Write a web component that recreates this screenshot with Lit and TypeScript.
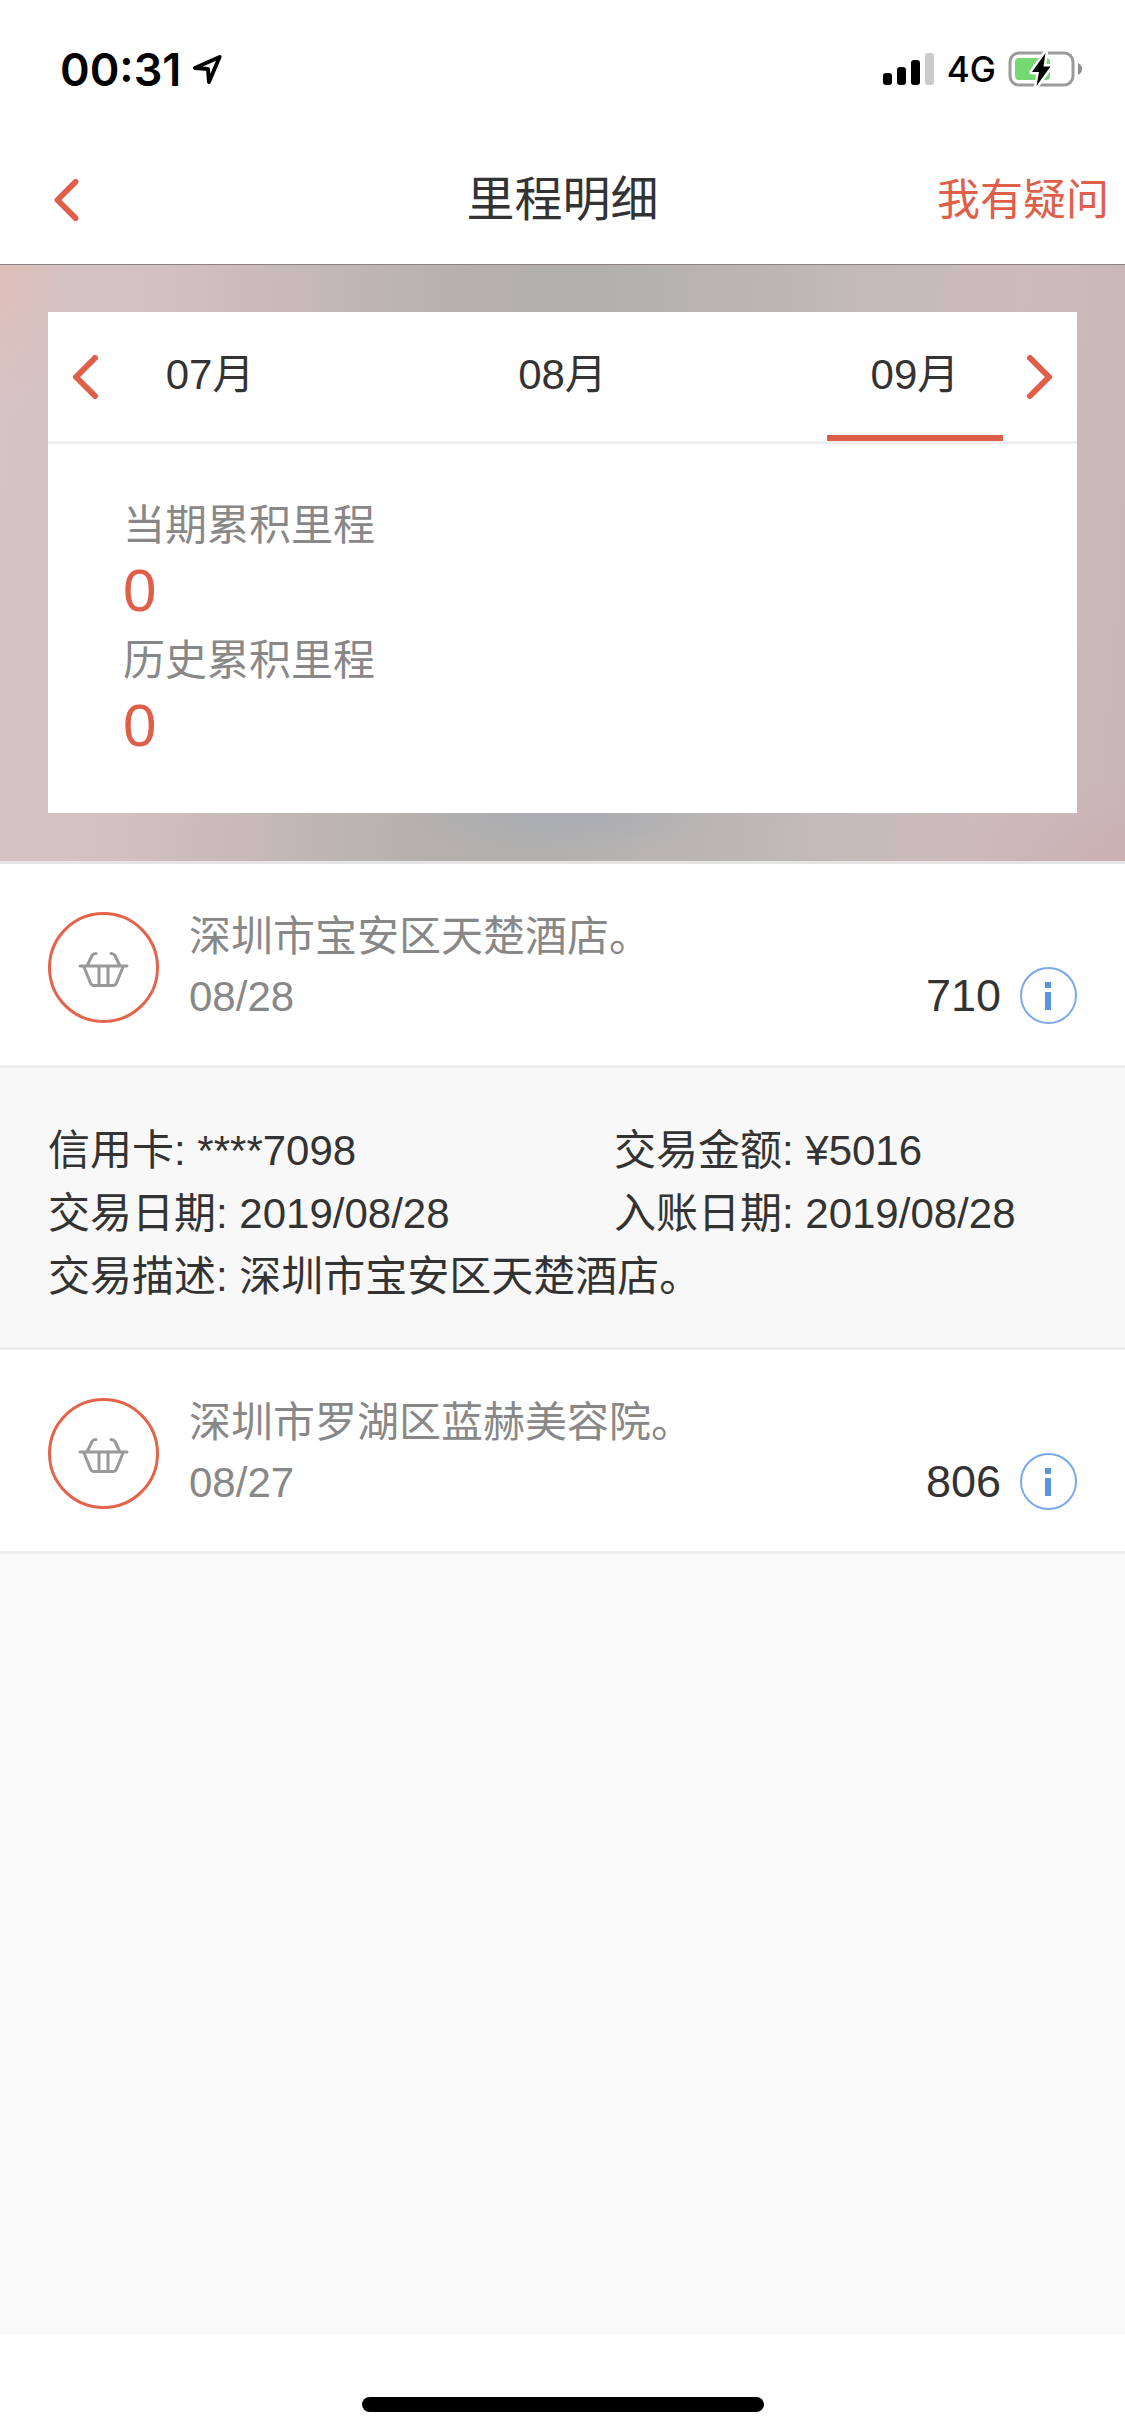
import { LitElement, html, css, svg, nothing } from "lit";
import { customElement, property, state } from "lit/decorators.js";

interface Transaction {
  id: number;
  merchant: string;
  day: string;
  miles: number;
  card: string;
  amount: string;
  tradeDate: string;
  postDate: string;
}

const TRANSACTIONS: Transaction[] = [
  {
    id: 1,
    merchant: "深圳市宝安区天楚酒店。",
    day: "08/28",
    miles: 710,
    card: "****7098",
    amount: "¥5016",
    tradeDate: "2019/08/28",
    postDate: "2019/08/28",
  },
  {
    id: 2,
    merchant: "深圳市罗湖区蓝赫美容院。",
    day: "08/27",
    miles: 806,
    card: "****7098",
    amount: "",
    tradeDate: "2019/08/27",
    postDate: "2019/08/27",
  },
];

const chevron = (direction: "left" | "right") => html`
  <svg class="chevron" viewBox="0 0 26 44" aria-hidden="true">
    ${direction === "left"
      ? svg`<path d="M23 3 L4 22 L23 41" />`
      : svg`<path d="M3 3 L22 22 L3 41" />`}
  </svg>
`;

const shared = css`
  * {
    box-sizing: border-box;
  }
  button {
    margin: 0;
    padding: 0;
    border: 0;
    background: none;
    font: inherit;
    color: inherit;
    cursor: pointer;
  }
  svg {
    display: block;
  }
  .chevron {
    width: 26px;
    height: 44px;
    fill: none;
    stroke: #e05f49;
    stroke-width: 6;
    stroke-linecap: round;
    stroke-linejoin: round;
  }
`;

@customElement("status-bar")
export class StatusBar extends LitElement {
  static styles = [
    shared,
    css`
      :host {
        display: flex;
        align-items: center;
        justify-content: space-between;
        box-sizing: border-box;
        height: 132px;
        padding: 6px 41px 0 60px;
        font-family: Inter, "Liberation Sans", sans-serif;
        color: #000;
      }
      .group {
        display: flex;
        align-items: center;
      }
      .time {
        font-size: 45px;
        font-weight: 600;
      }
      .arrow {
        width: 31px;
        height: 31px;
        margin-left: 11px;
      }
      .signal {
        width: 52px;
        height: 34px;
      }
      .network {
        margin: 0 12px;
        font-size: 35px;
        font-weight: 500;
      }
      .battery {
        width: 76px;
        height: 38px;
      }
    `,
  ];

  render() {
    return html`
      <div class="group">
        <span class="time">00:31</span>
        <svg class="arrow" viewBox="0 0 32 32" aria-hidden="true">
          <path
            d="M28.5 3 L3 14.500 L16.500 15.500 L17.500 29 Z"
            fill="none"
            stroke="#000"
            stroke-width="4"
            stroke-linejoin="round"
          />
        </svg>
      </div>
      <div class="group">
        <svg class="signal" viewBox="0 0 52 34" aria-hidden="true">
          <rect x="0" y="21" width="9" height="12" rx="3" />
          <rect x="14" y="15" width="9" height="18" rx="3" />
          <rect x="28" y="8" width="9" height="25" rx="3" />
          <rect x="42" y="1" width="9" height="32" rx="3" fill="#cbcbcb" />
        </svg>
        <span class="network">4G</span>
        <svg class="battery" viewBox="0 0 76 38" aria-hidden="true">
          <rect x="2" y="3" width="63" height="32" rx="9" fill="#fff" stroke="#9b9b9b" stroke-width="3" />
          <rect x="7" y="8" width="35" height="22" rx="4" fill="#75d873" />
          <path d="M70 13 Q74 15 74 19 Q74 23 70 25 Z" fill="#8c8c8c" />
          <path
            d="M37.5 3 L24 22 H31 L28.5 36 L42.5 16.5 H35.5 Z"
            fill="#000"
            stroke="#fff"
            stroke-width="5"
            stroke-linejoin="round"
            paint-order="stroke"
          />
        </svg>
      </div>
    `;
  }
}

@customElement("month-summary")
export class MonthSummary extends LitElement {
  @state() private selected = "09月";

  static styles = [
    shared,
    css`
      :host {
        display: block;
        padding: 47px 48px 48px;
        border-bottom: 3px solid #e6e4e4;
        background:
          radial-gradient(ellipse 70px 150px at 0 0, #dfbfb8, transparent),
          radial-gradient(ellipse 180px 80px at 100% 100%, #ccb1b1, transparent),
          radial-gradient(ellipse 160px 40px at 50% 92%, #abadb2, transparent),
          linear-gradient(
            95deg,
            #d6c4c5 0%,
            #d3c0c2 14%,
            #c6b9b8 26%,
            #b4b0ae 40%,
            #b1b0af 50%,
            #b9b5b4 63%,
            #c5babb 75%,
            #cdbbbe 87%,
            #c8b5b8 100%
          );
      }
      .card {
        background: #fff;
      }
      .months {
        display: flex;
        align-items: stretch;
        height: 132px;
        border-bottom: 3px solid #eee;
      }
      .step {
        display: flex;
        align-items: center;
        justify-content: center;
        width: 74px;
      }
      .step .chevron {
        flex: none;
      }
      .tabs {
        display: flex;
        flex: 1;
        justify-content: space-between;
      }
      .tab {
        width: 20%;
        padding-top: 2px;
        border-bottom: 6px solid transparent;
        font-size: 42px;
        line-height: 60px;
        white-space: nowrap;
        color: #333;
      }
      .tab.selected {
        border-bottom-color: #de5f49;
      }
      .totals {
        margin: 0;
        padding: 46px 75px 53px;
      }
      .label {
        padding-top: 6px;
        font-size: 42px;
        line-height: 60px;
        color: #888;
      }
      .value {
        margin: 0;
        font-size: 60px;
        line-height: 69px;
        color: #e05f49;
      }
    `,
  ];

  render() {
    return html`
      <div class="card">
        <div class="months">
          <button class="step" aria-label="上一月">${chevron("left")}</button>
          <div class="tabs" role="tablist">
            ${["07月", "08月", "09月"].map(
              (month) => html`
                <button
                  class="tab ${month === this.selected ? "selected" : ""}"
                  role="tab"
                  aria-selected=${month === this.selected}
                  @click=${() => (this.selected = month)}
                >
                  ${month}
                </button>
              `
            )}
          </div>
          <button class="step" aria-label="下一月">${chevron("right")}</button>
        </div>
        <dl class="totals">
          <dt class="label">当期累积里程</dt>
          <dd class="value">0</dd>
          <dt class="label">历史累积里程</dt>
          <dd class="value">0</dd>
        </dl>
      </div>
    `;
  }
}

@customElement("transaction-row")
export class TransactionRow extends LitElement {
  @property({ attribute: false }) item!: Transaction;
  @property({ type: Boolean }) open = false;

  static styles = [
    shared,
    css`
      :host {
        display: block;
      }
      .row {
        display: flex;
        align-items: center;
        padding: 43px 48px 38px;
        border-bottom: 3px solid #eee;
        background: #fff;
      }
      .basket {
        flex: none;
        width: 111px;
        height: 111px;
        margin-right: 30px;
      }
      .text {
        flex: 1;
        font-size: 42px;
        line-height: 60px;
        color: #888;
      }
      .text p {
        margin: 0;
      }
      .amount {
        display: flex;
        align-items: center;
        align-self: flex-end;
        gap: 19px;
        padding-bottom: 3px;
        font-size: 45px;
        line-height: 57px;
        color: #333;
      }
      .info {
        width: 57px;
        height: 57px;
      }
      .details {
        display: grid;
        grid-template-columns: 55% 45%;
        padding: 51px 48px 39px;
        border-bottom: 3px solid #eee;
        background: #f8f8f8;
        font-size: 42px;
        line-height: 63px;
        color: #333;
      }
      .details p {
        margin: 0;
      }
      .wide {
        grid-column: 1 / -1;
      }
    `,
  ];

  private toggle() {
    this.open = !this.open;
  }

  render() {
    const t = this.item;
    return html`
      <div class="row">
        <svg class="basket" viewBox="0 0 111 111" aria-hidden="true">
          <circle cx="55.5" cy="55.5" r="54" fill="none" stroke="#e4644b" stroke-width="3" />
          <g fill="none" stroke="#999" stroke-width="3" stroke-linecap="round" stroke-linejoin="round">
            <path d="M32 54 H79" />
            <path d="M36 55 L42.5 71 Q43.5 73.5 46 73.5 H65 Q67.5 73.5 68.5 71 L75 55" />
            <path d="M51 55 V73 M60 55 V73" />
            <path d="M39.5 53 L44 43.5 Q45.5 41.5 48 41.5" />
            <path d="M71.5 53 L67 43.5 Q65.5 41.5 63 41.5" />
          </g>
        </svg>
        <div class="text">
          <p>${t.merchant}</p>
          <p>${t.day}</p>
        </div>
        <div class="amount">
          <span>${t.miles}</span>
          <button aria-label="查看详情" aria-expanded=${this.open} @click=${this.toggle}>
            <svg class="info" viewBox="0 0 57 57" aria-hidden="true">
              <circle cx="28.5" cy="28.5" r="27.5" fill="none" stroke="#7ba9ec" stroke-width="2" />
              <path d="M25 15 h6 v6 h-6 z M25 25 h6 v18 h-6 z" fill="#5b93de" />
            </svg>
          </button>
        </div>
      </div>
      ${this.open
        ? html`
            <div class="details">
              <p>信用卡: ${t.card}</p>
              <p>交易金额: ${t.amount}</p>
              <p>交易日期: ${t.tradeDate}</p>
              <p>入账日期: ${t.postDate}</p>
              <p class="wide">交易描述: ${t.merchant}</p>
            </div>
          `
        : nothing}
    `;
  }
}

@customElement("app-root")
export class AppRoot extends LitElement {
  static styles = [
    shared,
    css`
      :host {
        display: flex;
        flex-direction: column;
        min-height: 100vh;
        background: #f9f9f9;
        font-family: "Liberation Sans", "Noto Sans CJK SC", sans-serif;
        color: #333;
      }
      .top {
        border-bottom: 1px solid #8c8283;
        background: #fff;
      }
      .nav {
        display: grid;
        grid-template-columns: 1fr auto 1fr;
        align-items: center;
        height: 132px;
        padding: 4px 16px 0;
      }
      .back {
        justify-self: start;
        padding: 0 37px;
      }
      .back .chevron {
        height: 42px;
      }
      .title {
        margin: 0;
        font-size: 48px;
        font-weight: 400;
        line-height: 72px;
      }
      .help {
        justify-self: end;
        font-size: 43px;
        line-height: 60px;
        color: #e05f49;
        text-decoration: none;
      }
      .list {
        flex: 1;
        margin: 0;
        padding: 0;
        list-style: none;
      }
      .home {
        display: flex;
        justify-content: center;
        padding: 63px 0 24px;
        background: #fff;
      }
      .indicator {
        width: 402px;
        height: 15px;
        border-radius: 8px;
        background: #000;
      }
    `,
  ];

  render() {
    return html`
      <header class="top">
        <status-bar></status-bar>
        <nav class="nav">
          <button class="back" aria-label="返回">${chevron("left")}</button>
          <h1 class="title">里程明细</h1>
          <a class="help" href="#help">我有疑问</a>
        </nav>
      </header>
      <month-summary></month-summary>
      <ul class="list">
        ${TRANSACTIONS.map(
          (item) => html`
            <li><transaction-row .item=${item} ?open=${item.id === 1}></transaction-row></li>
          `
        )}
      </ul>
      <footer class="home"><div class="indicator"></div></footer>
    `;
  }
}
